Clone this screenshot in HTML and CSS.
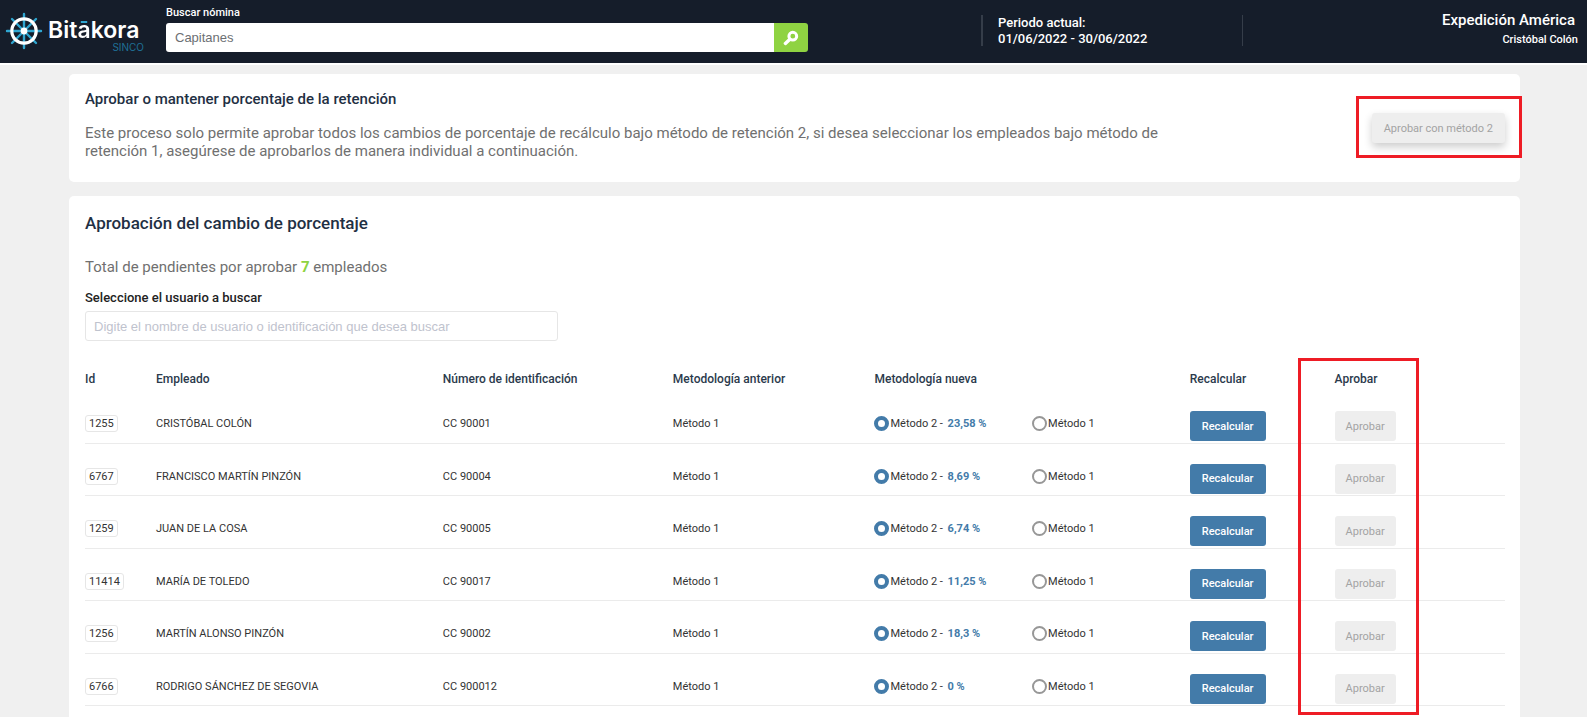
FILE: index.html
```html
<!DOCTYPE html>
<html lang="es">
<head>
<meta charset="utf-8">
<meta name="viewport" content="width=device-width, initial-scale=1">
<title>Bitākora SINCO</title>
<link rel="stylesheet" href="styles.css">
</head>
<body>
<div class="app">
  <header class="topbar">
    <div class="logo">
      <svg class="logo-wheel" viewBox="0 0 38 38" aria-hidden="true">
        <g stroke="#2fa5cf" stroke-width="2.4" stroke-linecap="round">
          <path d="M19 2v34M2 19h34M7 7l24 24M31 7L7 31"/>
        </g>
        <circle cx="19" cy="19" r="12.2" fill="none" stroke="#fff" stroke-width="3.2"/>
        <circle cx="19" cy="19" r="3.4" fill="#fff"/>
      </svg>
      <div class="logo-text">
        <span class="logo-name">Bit<span class="logo-macron">ā</span>kora</span>
        <span class="logo-sub">SINCO</span>
      </div>
    </div>
    <form class="payroll">
      <label class="payroll-label" for="payroll">Buscar nómina</label>
      <div class="payroll-field">
        <input class="payroll-input" id="payroll" type="text" value="Capitanes">
        <button class="payroll-button" type="button" aria-label="Buscar">
          <svg viewBox="0 0 16 16" width="16" height="16" aria-hidden="true">
            <circle cx="9.8" cy="6.2" r="3.9" fill="none" stroke="#fff" stroke-width="3"/>
            <path d="M6.6 9.4L2.4 13.4" stroke="#fff" stroke-width="3.4" stroke-linecap="round"/>
          </svg>
        </button>
      </div>
    </form>
    <div class="period">
      <span>Periodo actual:</span>
      <span>01/06/2022 - 30/06/2022</span>
    </div>
    <div class="account">
      <span class="account-company">Expedición América</span>
      <span class="account-user">Cristóbal Colón</span>
    </div>
  </header>

  <main class="content">
    <section class="card intro">
      <div class="intro-text">
        <h2 class="intro-title">Aprobar o mantener porcentaje de la retención</h2>
        <p class="lead">Este proceso solo permite aprobar todos los cambios de porcentaje de recálculo bajo método de retención 2, si desea seleccionar los empleados bajo método de retención 1, asegúrese de aprobarlos de manera individual a continuación.</p>
      </div>
      <div class="intro-action">
        <button class="btn btn-disabled btn-raised" type="button" disabled>Aprobar con método 2</button>
        <span class="mark mark-button"></span>
      </div>
    </section>

    <section class="card approvals">
      <h1 class="approvals-title">Aprobación del cambio de porcentaje</h1>
      <p class="lead total">Total de pendientes por aprobar <strong class="count">7</strong> empleados</p>
      <label class="search-label" for="user">Seleccione el usuario a buscar</label>
      <input class="search-input" id="user" type="text" placeholder="Digite el nombre de usuario o identificación que desea buscar">

      <table class="grid">
        <colgroup>
          <col class="c-id"><col class="c-name"><col class="c-doc"><col class="c-prev"><col class="c-new"><col class="c-calc"><col class="c-ok">
        </colgroup>
        <thead>
          <tr><th>Id</th><th>Empleado</th><th>Número de identificación</th><th>Metodología anterior</th><th>Metodología nueva</th><th>Recalcular</th><th class="marked">Aprobar<span class="mark mark-column"></span></th></tr>
        </thead>
        <tbody>
          <tr>
            <td><span class="id">1255</span></td><td>CRISTÓBAL COLÓN</td><td>CC 90001</td><td>Método 1</td>
            <td><div class="options"><label class="option"><input type="radio" name="m1255" checked><span>Método 2 - <b class="rate">23,58 %</b></span></label><label class="option"><input type="radio" name="m1255"><span>Método 1</span></label></div></td>
            <td class="action"><button class="btn btn-primary" type="button">Recalcular</button></td><td class="action"><button class="btn btn-disabled" type="button" disabled>Aprobar</button></td>
          </tr>
          <tr>
            <td><span class="id">6767</span></td><td>FRANCISCO MARTÍN PINZÓN</td><td>CC 90004</td><td>Método 1</td>
            <td><div class="options"><label class="option"><input type="radio" name="m6767" checked><span>Método 2 - <b class="rate">8,69 %</b></span></label><label class="option"><input type="radio" name="m6767"><span>Método 1</span></label></div></td>
            <td class="action"><button class="btn btn-primary" type="button">Recalcular</button></td><td class="action"><button class="btn btn-disabled" type="button" disabled>Aprobar</button></td>
          </tr>
          <tr>
            <td><span class="id">1259</span></td><td>JUAN DE LA COSA</td><td>CC 90005</td><td>Método 1</td>
            <td><div class="options"><label class="option"><input type="radio" name="m1259" checked><span>Método 2 - <b class="rate">6,74 %</b></span></label><label class="option"><input type="radio" name="m1259"><span>Método 1</span></label></div></td>
            <td class="action"><button class="btn btn-primary" type="button">Recalcular</button></td><td class="action"><button class="btn btn-disabled" type="button" disabled>Aprobar</button></td>
          </tr>
          <tr>
            <td><span class="id">11414</span></td><td>MARÍA DE TOLEDO</td><td>CC 90017</td><td>Método 1</td>
            <td><div class="options"><label class="option"><input type="radio" name="m11414" checked><span>Método 2 - <b class="rate">11,25 %</b></span></label><label class="option"><input type="radio" name="m11414"><span>Método 1</span></label></div></td>
            <td class="action"><button class="btn btn-primary" type="button">Recalcular</button></td><td class="action"><button class="btn btn-disabled" type="button" disabled>Aprobar</button></td>
          </tr>
          <tr>
            <td><span class="id">1256</span></td><td>MARTÍN ALONSO PINZÓN</td><td>CC 90002</td><td>Método 1</td>
            <td><div class="options"><label class="option"><input type="radio" name="m1256" checked><span>Método 2 - <b class="rate">18,3 %</b></span></label><label class="option"><input type="radio" name="m1256"><span>Método 1</span></label></div></td>
            <td class="action"><button class="btn btn-primary" type="button">Recalcular</button></td><td class="action"><button class="btn btn-disabled" type="button" disabled>Aprobar</button></td>
          </tr>
          <tr>
            <td><span class="id">6766</span></td><td>RODRIGO SÁNCHEZ DE SEGOVIA</td><td>CC 900012</td><td>Método 1</td>
            <td><div class="options"><label class="option"><input type="radio" name="m6766" checked><span>Método 2 - <b class="rate">0 %</b></span></label><label class="option"><input type="radio" name="m6766"><span>Método 1</span></label></div></td>
            <td class="action"><button class="btn btn-primary" type="button">Recalcular</button></td><td class="action"><button class="btn btn-disabled" type="button" disabled>Aprobar</button></td>
          </tr>
        </tbody>
      </table>
    </section>
  </main>
</div>
</body>
</html>
```

FILE: styles.css
```css
* { box-sizing: border-box; }

body {
  margin: 0;
  background: #fff;
  color: #333;
  font-family: Roboto, "Liberation Sans", sans-serif;
  font-size: 11px;
}

h1, h2, p { margin: 0; font-weight: 500; }
input, button { font-family: inherit; }

.app {
  display: flex;
  flex-direction: column;
  height: 100vh;
  padding-bottom: 3px;
  overflow: hidden;
}

/* Top bar */
.topbar {
  display: flex;
  flex: none;
  height: 65px;
  padding: 0 9px 0 5px;
  border-bottom: 2px solid #fff;
  background: #151d2a;
  background-clip: padding-box;
  color: #fff;
}

.logo { display: flex; width: 161px; padding-top: 12px; }
.logo-wheel { flex: none; width: 38px; height: 38px; }
.logo-text { display: flex; flex-direction: column; width: 96px; margin-left: 5px; padding-top: 6px; }
.logo-name { font: 600 23px/24px Inter, sans-serif; }
.logo-macron {
  background: linear-gradient(#2fa5cf 8px, #fff 8px);
  background-clip: text;
  -webkit-background-clip: text;
  color: transparent;
}
.logo-sub { align-self: flex-end; color: #1f7096; font: 400 10px/10px Inter, sans-serif; }

.payroll { display: flex; flex-direction: column; width: 642px; padding-top: 6px; }
.payroll-label { font-size: 11px; font-weight: 500; line-height: 14px; padding-bottom: 3px; }
.payroll-field { display: flex; height: 29px; }
.payroll-input {
  flex: 1;
  min-width: 0;
  padding: 0 9px;
  border: 0;
  border-radius: 3px 0 0 3px;
  background: #fff;
  color: #6c6f73;
  font: 13px "Liberation Sans", sans-serif;
}
.payroll-button {
  display: flex;
  align-items: center;
  justify-content: center;
  width: 34px;
  padding: 0;
  border: 0;
  border-radius: 0 3px 3px 0;
  background: #8fd342;
}

.period {
  display: flex;
  flex-direction: column;
  width: 262px;
  height: 31px;
  margin: 15px 0 0 173px;
  padding-left: 15px;
  border: solid #353d49;
  border-width: 0 1px 0 2px;
  font-size: 13px;
  font-weight: 500;
  line-height: 16px;
}

.account { display: flex; flex: 1; flex-direction: column; align-items: flex-end; padding-top: 11px; }
.account-company { padding-right: 3px; font-size: 15px; font-weight: 500; line-height: 18px; }
.account-user { font-size: 11px; font-weight: 500; line-height: 22px; }

/* Cards */
.content {
  display: flex;
  flex: 1;
  flex-direction: column;
  gap: 14px;
  min-height: 0;
  padding: 9px 67px 0 69px;
  background: #f0f0f0;
}
.card { padding: 16px 15px 0 16px; border-radius: 5px; background: #fff; }
.lead { color: #707070; font-size: 15px; font-weight: 400; line-height: 18px; }

.intro { display: flex; flex: none; align-items: flex-start; justify-content: space-between; height: 108px; }
.intro-text { width: 76%; }
.intro-title { padding-bottom: 16px; color: #1f3044; font-size: 15px; line-height: 18px; }
.intro-action { position: relative; padding-top: 23px; }

.approvals { flex: 1; min-height: 0; border-radius: 5px 5px 0 0; }
.approvals-title { color: #1f3044; font-size: 17px; line-height: 22px; }
.total { padding: 24px 0 13px; }
.count { color: #8fd342; font-weight: 700; }
.search-label { display: block; color: #222; font-size: 13px; font-weight: 500; line-height: 18px; }
.search-input {
  display: block;
  width: 33.3%;
  height: 30px;
  margin-top: 4px;
  padding: 0 8px;
  border: 1px solid #e6e6e6;
  border-radius: 3px;
  background: #fff;
  font: 13px "Liberation Sans", sans-serif;
}
.search-input::placeholder { color: #bfc3ce; }

/* Table */
.grid { width: 100%; margin-top: 18px; border-collapse: separate; border-spacing: 0; table-layout: fixed; }
.c-id { width: 5%; }
.c-name { width: 20.2%; }
.c-doc { width: 16.2%; }
.c-prev { width: 14.2%; }
.c-new { width: 22.2%; }
.c-calc { width: 10.2%; }
.c-ok { width: 12%; }

.grid th { height: 32px; padding: 8px 0 0; color: #2b3a4c; font-size: 12px; font-weight: 500; text-align: left; }
.grid td { height: 52px; padding: 13px 0 0; border-bottom: 1px solid #ebebeb; }
.grid tbody tr:nth-child(odd) td { height: 53px; }
.grid .action { padding-top: 18px; }

.id { display: inline-block; padding: 0 3px; border: 1px solid #e6e6e6; border-radius: 3px; line-height: 15px; }
.options { display: flex; }
.option { display: flex; flex: 1; align-items: center; gap: 1px; white-space: nowrap; }
.option input {
  appearance: none;
  width: 15px;
  height: 15px;
  margin: 0;
  border: 2px solid #979797;
  border-radius: 50%;
  background: #fff;
}
.option input:checked { border: 4px solid #437ba9; }
.rate { padding-left: 2px; color: #437ba9; }

/* Buttons */
.btn { display: block; height: 30px; padding: 0 11px; border: 0; border-radius: 3px; font-size: 11px; white-space: nowrap; }
.btn-primary { padding: 0 12px; background: #437ba9; color: #fff; font-weight: 500; }
.btn-disabled { background: #eee; color: #a3a3a3; }
.btn-raised { padding: 0 12px; box-shadow: 0 4px 8px rgba(0, 0, 0, 0.2); }

/* Red highlight frames drawn over the page */
.mark { position: absolute; border: 3px solid #ee1c25; pointer-events: none; }
.mark-button { inset: 6px -17px -15px -16px; }
.marked { position: relative; }
.mark-column { top: -1px; left: -37px; width: 121px; height: 357px; }
```
